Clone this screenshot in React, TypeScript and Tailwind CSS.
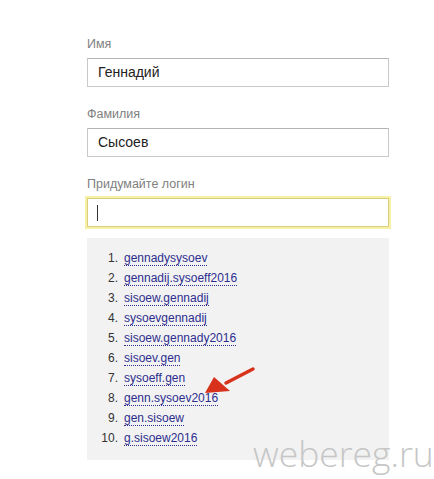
import React from 'react'

const logins = [
  'gennadysysoev',
  'gennadij.sysoeff2016',
  'sisoew.gennadij',
  'sysoevgennadij',
  'sisoew.gennady2016',
  'sisoev.gen',
  'sysoeff.gen',
  'genn.sysoev2016',
  'gen.sisoew',
  'g.sisoew2016',
]

function Field({ label, value, focused }: { label: string; value?: string; focused?: boolean }) {
  return (
    <div className="flex flex-col">
      <div className="text-[12.5px] leading-4 text-[#808080] mb-[6px]">{label}</div>
      <div
        className={
          focused
            ? 'h-[29px] border border-[#d9cf7a] shadow-[0_0_0_2px_#f7f1a8] bg-white flex items-center pl-[9px]'
            : 'h-[29px] border border-[#c9c9c9] border-t-[#b5b5b5] bg-white flex items-center pl-[10px]'
        }
      >
        {focused ? (
          <span className="w-px h-[16px] bg-[#333]" />
        ) : (
          <span className="text-[14px] text-[#222]">{value}</span>
        )}
      </div>
    </div>
  )
}

export default function App() {
  return (
    <div
      className="relative w-[434px] h-[479px] bg-white overflow-hidden"
      style={{ fontFamily: '"Liberation Sans", Arial, sans-serif' }}
    >
      <div className="pl-[87px] pt-[36px] w-[389px] flex flex-col gap-[19px]">
        <Field label="Имя" value="Геннадий" />
        <Field label="Фамилия" value="Сысоев" />
        <div className="flex flex-col">
          <Field label="Придумайте логин" focused />
          <ol className="mt-[11px] bg-[#f2f2f2] pt-[10px] pb-[12px]">
            {logins.map((l, i) => (
              <li key={l} className="flex h-5 items-center text-[12px]">
                <span className="w-[31px] text-right text-[#333]">{i + 1}.</span>
                <span className="ml-[6px] text-[#2d2d8f] border-b border-dotted border-[#2d2d8f] leading-[14px]">
                  {l}
                </span>
              </li>
            ))}
          </ol>
        </div>
      </div>

      {/* red arrow */}
      <svg className="absolute left-0 top-0" width="434" height="479" viewBox="0 0 434 479">
        <path d="M253 369 L226 383" stroke="#d8321c" strokeWidth="3.5" strokeLinecap="round" />
        <path d="M205 393 L214 377 L230 391 Z" fill="#d8321c" />
      </svg>

      <div
        className="absolute left-[253px] top-[436px] text-[35.5px] leading-none text-[#c6c6c6] font-light"
        style={{ fontFamily: '"Open Sans", Lato, sans-serif' }}
      >
        webereg.ru
      </div>
    </div>
  )
}
